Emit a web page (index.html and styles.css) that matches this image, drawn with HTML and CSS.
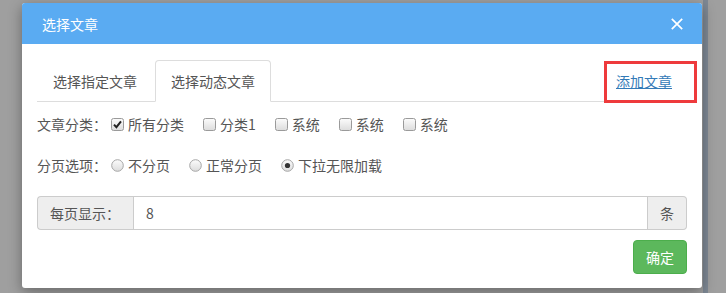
FILE: index.html
```html
<!DOCTYPE html>
<html lang="zh-CN">
<head>
<meta charset="utf-8">
<title>选择文章</title>
<link rel="stylesheet" href="styles.css">
</head>
<body>
<div class="page">
  <div class="modal">
    <div class="modal-header">
      <h4 class="modal-title">选择文章</h4>
      <button class="close" type="button" aria-label="关闭">
        <svg width="12" height="12" viewBox="0 0 12 12"><path d="M0.8 0.8 L11.2 11.2 M11.2 0.8 L0.8 11.2" stroke="#fff" stroke-width="1.7" fill="none"/></svg>
      </button>
    </div>
    <div class="modal-body">
      <ul class="nav-tabs">
        <li class="tab"><a>选择指定文章</a></li>
        <li class="tab active"><a>选择动态文章</a></li>
        <li class="tab-right"><a class="add-link" href="#">添加文章</a><span class="highlight"></span></li>
      </ul>

      <div class="form-row">
        <span class="row-label">文章分类：</span>
        <label class="opt"><span class="box">
          <svg width="13" height="13" viewBox="0 0 13 13"><defs><linearGradient id="g1" x1="0" y1="0" x2="0" y2="1"><stop offset="0" stop-color="#fcfcfc"/><stop offset="1" stop-color="#dcdcdc"/></linearGradient></defs><rect x="0.5" y="0.5" width="12" height="12" rx="2" fill="url(#g1)" stroke="#9a9a9a"/><path d="M3 6.6 L5.4 9.2 L10 3.4" stroke="#222" stroke-width="2" fill="none"/></svg>
        </span>所有分类</label>
        <label class="opt"><span class="box">
          <svg width="13" height="13" viewBox="0 0 13 13"><rect x="0.5" y="0.5" width="12" height="12" rx="2" fill="url(#g1)" stroke="#9a9a9a"/></svg>
        </span>分类1</label>
        <label class="opt"><span class="box">
          <svg width="13" height="13" viewBox="0 0 13 13"><rect x="0.5" y="0.5" width="12" height="12" rx="2" fill="url(#g1)" stroke="#9a9a9a"/></svg>
        </span>系统</label>
        <label class="opt"><span class="box">
          <svg width="13" height="13" viewBox="0 0 13 13"><rect x="0.5" y="0.5" width="12" height="12" rx="2" fill="url(#g1)" stroke="#9a9a9a"/></svg>
        </span>系统</label>
        <label class="opt"><span class="box">
          <svg width="13" height="13" viewBox="0 0 13 13"><rect x="0.5" y="0.5" width="12" height="12" rx="2" fill="url(#g1)" stroke="#9a9a9a"/></svg>
        </span>系统</label>
      </div>

      <div class="form-row row-radio">
        <span class="row-label">分页选项：</span>
        <label class="opt"><span class="box">
          <svg width="13" height="13" viewBox="0 0 13 13"><circle cx="6.5" cy="6.5" r="5.8" fill="url(#g1)" stroke="#a5a5a5"/></svg>
        </span>不分页</label>
        <label class="opt"><span class="box">
          <svg width="13" height="13" viewBox="0 0 13 13"><circle cx="6.5" cy="6.5" r="5.8" fill="url(#g1)" stroke="#a5a5a5"/></svg>
        </span>正常分页</label>
        <label class="opt"><span class="box">
          <svg width="13" height="13" viewBox="0 0 13 13"><circle cx="6.5" cy="6.5" r="5.8" fill="url(#g1)" stroke="#a5a5a5"/><circle cx="6.5" cy="6.5" r="2.6" fill="#333"/></svg>
        </span>下拉无限加载</label>
      </div>

      <div class="input-group">
        <span class="addon addon-left">每页显示：</span>
        <input class="form-control" type="text" value="8">
        <span class="addon addon-right">条</span>
      </div>

      <div class="actions">
        <button class="btn-success" type="button">确定</button>
      </div>
    </div>
  </div>
</div>
</body>
</html>
```

FILE: styles.css
```css
* { box-sizing: border-box; }

html, body {
  margin: 0;
  padding: 0;
}

body {
  width: 726px;
  height: 293px;
  overflow: hidden;
  background:
    linear-gradient(to right, transparent 703px, #7e8894 703px, #7e8894 708px, transparent 708px),
    #9f9f9f;
  font-family: "Noto Sans CJK SC", "Noto Sans", sans-serif;
  font-size: 14px;
  line-height: 20px;
  color: #555;
}

.page {
  padding: 3px 0 0 22px;
}

.modal {
  width: 680px;
  background: #fff;
  border-radius: 3px;
  box-shadow: 0 4px 14px rgba(0, 0, 0, 0.35);
  overflow: hidden;
}

.modal-header {
  height: 41px;
  background: #5aabf2;
  display: flex;
  align-items: center;
  justify-content: space-between;
  padding: 0 19px 0 20px;
}

.modal-title {
  margin: 0;
  font-size: 14px;
  font-weight: normal;
  color: #fff;
  line-height: 20px;
}

.close {
  border: 0;
  background: transparent;
  padding: 0;
  width: 12px;
  height: 12px;
  display: flex;
  cursor: pointer;
}

.modal-body {
  padding: 16px 15px 14px;
}

.nav-tabs {
  list-style: none;
  margin: 0;
  padding: 0;
  display: flex;
  border-bottom: 1px solid #ddd;
}

.tab {
  margin: 0 2px -1px 0;
}

.tab a {
  display: block;
  padding: 10px 15px;
  border: 1px solid transparent;
  border-radius: 4px 4px 0 0;
  color: #555;
  line-height: 20px;
}

.tab.active a {
  background: #fff;
  border-color: #ddd #ddd transparent;
}

.tab-right {
  margin-left: auto;
  position: relative;
  padding: 11px 15px 10px;
}

.add-link {
  color: #337ab7;
  text-decoration: underline;
}

.highlight {
  position: absolute;
  left: 3px;
  top: 1px;
  width: 93px;
  height: 42px;
  border: 3px solid #ee3a3c;
}

.form-row {
  display: flex;
  align-items: center;
  margin-top: 12px;
  height: 20px;
}

.row-radio {
  margin-top: 21px;
}

.opt {
  display: flex;
  align-items: center;
  margin-right: 15px;
}

.box {
  display: flex;
  margin: 0 4px;
}

.input-group {
  display: flex;
  margin-top: 21px;
  height: 34px;
}

.addon {
  display: flex;
  align-items: center;
  padding: 0 12px;
  background: #eee;
  border: 1px solid #ccc;
  color: #555;
}

.addon-left {
  border-right: 0;
  border-radius: 4px 0 0 4px;
  width: 96px;
}

.addon-right {
  border-left: 0;
  border-radius: 0 4px 4px 0;
  width: 39px;
}

.form-control {
  flex: 1;
  min-width: 0;
  height: 34px;
  border: 1px solid #ccc;
  padding: 0 12px;
  font-family: "Noto Sans CJK SC", "Noto Sans", sans-serif;
  font-size: 14px;
  color: #555;
  outline: none;
}

.actions {
  display: flex;
  justify-content: flex-end;
  margin-top: 10px;
}

.btn-success {
  width: 54px;
  height: 34px;
  padding: 0;
  border: 1px solid #4cae4c;
  border-radius: 4px;
  background: #5cb85c;
  color: #fff;
  font-family: "Noto Sans CJK SC", "Noto Sans", sans-serif;
  font-size: 14px;
  line-height: 20px;
  cursor: pointer;
}
```
